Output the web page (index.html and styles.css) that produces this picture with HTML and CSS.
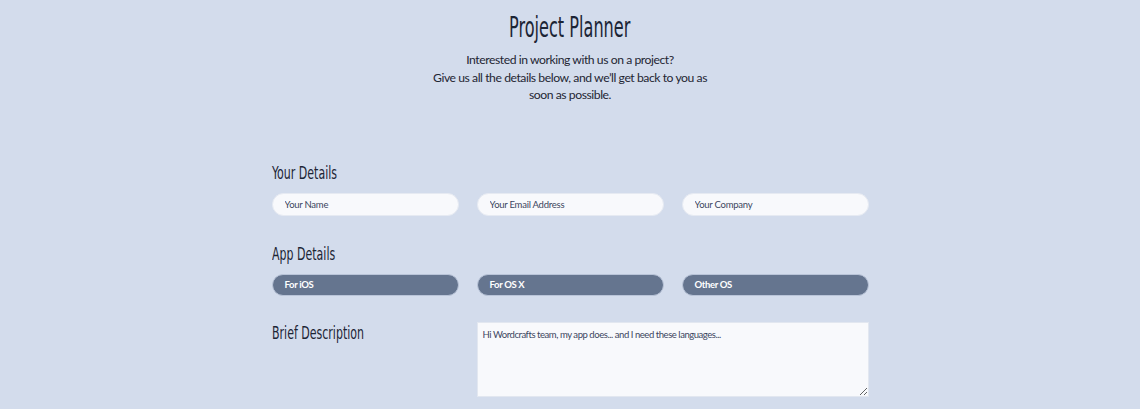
FILE: index.html
```html
<!DOCTYPE html>
<html>
<head>
<meta charset="utf-8">
<link rel="stylesheet" href="styles.css">
</head>
<body>
<div class="page">
  <header class="intro">
    <h1 class="title">Project Planner</h1>
    <p class="lead">Interested in working with us on a project?<br>Give us all the details below, and we’ll get back to you as<br>soon as possible.</p>
  </header>
  <form class="planner">
    <h2 class="section-title">Your Details</h2>
    <div class="row">
      <input class="field" type="text" placeholder="Your Name">
      <input class="field" type="text" placeholder="Your Email Address">
      <input class="field" type="text" placeholder="Your Company">
    </div>
    <h2 class="section-title">App Details</h2>
    <div class="row">
      <button type="button" class="choice">For iOS</button>
      <button type="button" class="choice">For OS X</button>
      <button type="button" class="choice">Other OS</button>
    </div>
    <div class="row desc-row">
      <h2 class="section-title desc-title">Brief Description</h2>
      <textarea class="desc" placeholder="Hi Wordcrafts team, my app does... and I need these languages..."></textarea>
    </div>
  </form>
</div>
</body>
</html>
```
FILE: styles.css
```css
* { box-sizing: border-box; }
html, body { margin: 0; padding: 0; }
body {
  background: #d3dcec;
  font-family: Lato, "Open Sans", sans-serif;
  color: #1f2633;
  height: 409px;
  overflow: hidden;
}
.page { width: 1140px; }
.intro { text-align: center; padding-top: 11px; }
.title {
  margin: 0;
  font-family: "Liberation Sans Narrow", "DejaVu Sans Condensed", sans-serif;
  font-weight: normal;
  font-size: 28px;
  line-height: 34px;
  color: #1c2535;
  display: inline-block;
  transform: scaleX(0.64);
}
.lead {
  margin: 6px 0 0;
  font-size: 12.2px;
  line-height: 17.5px;
  letter-spacing: -0.45px;
  color: #1f2633;
}
.planner {
  width: 597px;
  margin: 58px auto 0;
}
.section-title {
  margin: 0 0 9px;
  font-family: "Liberation Sans Narrow", "DejaVu Sans Condensed", sans-serif;
  font-weight: normal;
  font-size: 18px;
  line-height: 22px;
  color: #1c2535;
  transform: scaleX(0.68);
  transform-origin: left center;
  white-space: nowrap;
}
.row {
  display: grid;
  grid-template-columns: 187px 187px 187px;
  column-gap: 18px;
  margin-bottom: 27px;
}
.field {
  height: 23px;
  border: 1px solid #e6eaf2;
  border-radius: 12px;
  background: #f8f9fc;
  padding: 0 12px;
  font-family: Lato, sans-serif;
  font-size: 9.5px;
  letter-spacing: -0.25px;
  color: #3c4660;
  outline: none;
}
.field::placeholder { color: #3c4660; }
.choice {
  height: 22px;
  border: 1px solid #b9c4d8;
  border-radius: 11px;
  background: #65758f;
  color: #ffffff;
  font-family: Lato, sans-serif;
  font-weight: bold;
  font-size: 9.5px;
  letter-spacing: -0.35px;
  text-align: left;
  padding: 0 12px;
}
.desc-row { margin-bottom: 0; margin-top: -1px; }
.desc-title { margin-top: 0; padding-top: 0; }
.desc {
  grid-column: 2 / 4;
  height: 75px;
  margin: 0;
  border: 1px solid #e2e7f0;
  border-radius: 0;
  background: #f8f9fc;
  padding: 6px 5px;
  font-family: Lato, sans-serif;
  font-size: 9.5px;
  letter-spacing: -0.45px;
  color: #3c4660;
  resize: vertical;
  outline: none;
}
.desc::placeholder { color: #3c4660; }
```
